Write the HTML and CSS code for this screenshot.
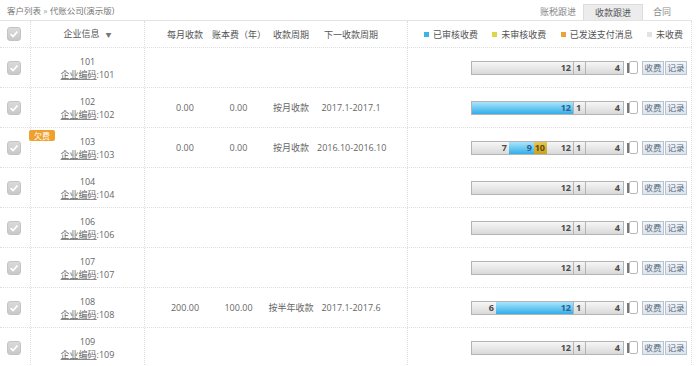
FILE: index.html
```html
<!DOCTYPE html>
<html lang="zh-CN">
<head>
    <meta charset="UTF-8">
    <title>客户列表</title>
    <link rel="stylesheet" href="styles.css">
</head>
<body>
<div class="page">
    <div class="topbar">
        <div class="crumb">客户列表 <span class="sep">»</span> 代账公司(演示版)</div>
        <div class="tabs">
            <span class="tab first">账税跟进</span>
            <span class="tab active">收款跟进</span>
            <span class="tab">合同</span>
        </div>
    </div>

    <div class="row head">
        <div class="cell-check"><span class="chk"><svg viewBox="0 0 12 12" width="12" height="12"><path d="M2.6 6.2 L5 8.5 L9.4 3.6" fill="none" stroke="#fff" stroke-width="1.7"/></svg></span></div>
        <div class="cell-info"><span>企业信息<span class="caret">▼</span></span></div>
        <div class="cell-data">
            <span></span><span>每月收款</span><span>账本费（年）</span><span>收款周期</span><span>下一收款周期</span>
        </div>
        <div class="cell-bar legend">
            <span class="lg"><i class="sq blue"></i>已审核收费</span>
            <span class="lg"><i class="sq yellow"></i>未审核收费</span>
            <span class="lg"><i class="sq orange"></i>已发送支付消息</span>
            <span class="lg"><i class="sq grey"></i>未收费</span>
        </div>
    </div>

    <!-- 101 -->
    <div class="row">
        <div class="cell-check"><span class="chk"><svg viewBox="0 0 12 12" width="12" height="12"><path d="M2.6 6.2 L5 8.5 L9.4 3.6" fill="none" stroke="#fff" stroke-width="1.7"/></svg></span></div>
        <div class="cell-info"><span>101</span><span><u>企业编码</u>:101</span></div>
        <div class="cell-data"></div>
        <div class="cell-bar">
            <div class="months"><span class="seg fill">12</span></div>
            <span class="box one">1</span><span class="box four">4</span>
            <span class="handle"><i class="grip"></i><i class="knob"></i></span>
            <span class="btn">收费</span><span class="btn">记录</span>
        </div>
    </div>

    <!-- 102 -->
    <div class="row">
        <div class="cell-check"><span class="chk"><svg viewBox="0 0 12 12" width="12" height="12"><path d="M2.6 6.2 L5 8.5 L9.4 3.6" fill="none" stroke="#fff" stroke-width="1.7"/></svg></span></div>
        <div class="cell-info"><span>102</span><span><u>企业编码</u>:102</span></div>
        <div class="cell-data">
            <span></span><span>0.00</span><span>0.00</span><span>按月收款</span><span>2017.1-2017.1</span>
        </div>
        <div class="cell-bar">
            <div class="months"><span class="seg fill paid">12</span></div>
            <span class="box one">1</span><span class="box four">4</span>
            <span class="handle"><i class="grip"></i><i class="knob"></i></span>
            <span class="btn">收费</span><span class="btn">记录</span>
        </div>
    </div>

    <!-- 103 -->
    <div class="row">
        <span class="badge">欠费</span>
        <div class="cell-check"><span class="chk"><svg viewBox="0 0 12 12" width="12" height="12"><path d="M2.6 6.2 L5 8.5 L9.4 3.6" fill="none" stroke="#fff" stroke-width="1.7"/></svg></span></div>
        <div class="cell-info"><span>103</span><span><u>企业编码</u>:103</span></div>
        <div class="cell-data">
            <span></span><span>0.00</span><span>0.00</span><span>按月收款</span><span>2016.10-2016.10</span>
        </div>
        <div class="cell-bar">
            <div class="months">
                <span class="seg" style="width: 37px;">7</span>
                <span class="seg paid" style="width: 25px;">9</span>
                <span class="seg sent" style="width: 13px;">10</span>
                <span class="seg fill">12</span>
            </div>
            <span class="box one">1</span><span class="box four">4</span>
            <span class="handle"><i class="grip"></i><i class="knob"></i></span>
            <span class="btn">收费</span><span class="btn">记录</span>
        </div>
    </div>

    <!-- 104 -->
    <div class="row">
        <div class="cell-check"><span class="chk"><svg viewBox="0 0 12 12" width="12" height="12"><path d="M2.6 6.2 L5 8.5 L9.4 3.6" fill="none" stroke="#fff" stroke-width="1.7"/></svg></span></div>
        <div class="cell-info"><span>104</span><span><u>企业编码</u>:104</span></div>
        <div class="cell-data"></div>
        <div class="cell-bar">
            <div class="months"><span class="seg fill">12</span></div>
            <span class="box one">1</span><span class="box four">4</span>
            <span class="handle"><i class="grip"></i><i class="knob"></i></span>
            <span class="btn">收费</span><span class="btn">记录</span>
        </div>
    </div>

    <!-- 106 -->
    <div class="row">
        <div class="cell-check"><span class="chk"><svg viewBox="0 0 12 12" width="12" height="12"><path d="M2.6 6.2 L5 8.5 L9.4 3.6" fill="none" stroke="#fff" stroke-width="1.7"/></svg></span></div>
        <div class="cell-info"><span>106</span><span><u>企业编码</u>:106</span></div>
        <div class="cell-data"></div>
        <div class="cell-bar">
            <div class="months"><span class="seg fill">12</span></div>
            <span class="box one">1</span><span class="box four">4</span>
            <span class="handle"><i class="grip"></i><i class="knob"></i></span>
            <span class="btn">收费</span><span class="btn">记录</span>
        </div>
    </div>

    <!-- 107 -->
    <div class="row">
        <div class="cell-check"><span class="chk"><svg viewBox="0 0 12 12" width="12" height="12"><path d="M2.6 6.2 L5 8.5 L9.4 3.6" fill="none" stroke="#fff" stroke-width="1.7"/></svg></span></div>
        <div class="cell-info"><span>107</span><span><u>企业编码</u>:107</span></div>
        <div class="cell-data"></div>
        <div class="cell-bar">
            <div class="months"><span class="seg fill">12</span></div>
            <span class="box one">1</span><span class="box four">4</span>
            <span class="handle"><i class="grip"></i><i class="knob"></i></span>
            <span class="btn">收费</span><span class="btn">记录</span>
        </div>
    </div>

    <!-- 108 -->
    <div class="row">
        <div class="cell-check"><span class="chk"><svg viewBox="0 0 12 12" width="12" height="12"><path d="M2.6 6.2 L5 8.5 L9.4 3.6" fill="none" stroke="#fff" stroke-width="1.7"/></svg></span></div>
        <div class="cell-info"><span>108</span><span><u>企业编码</u>:108</span></div>
        <div class="cell-data">
            <span></span><span>200.00</span><span>100.00</span><span>按半年收款</span><span>2017.1-2017.6</span>
        </div>
        <div class="cell-bar">
            <div class="months">
                <span class="seg" style="width: 24px;">6</span>
                <span class="seg fill paid">12</span>
            </div>
            <span class="box one">1</span><span class="box four">4</span>
            <span class="handle"><i class="grip"></i><i class="knob"></i></span>
            <span class="btn">收费</span><span class="btn">记录</span>
        </div>
    </div>

    <!-- 109 -->
    <div class="row">
        <div class="cell-check"><span class="chk"><svg viewBox="0 0 12 12" width="12" height="12"><path d="M2.6 6.2 L5 8.5 L9.4 3.6" fill="none" stroke="#fff" stroke-width="1.7"/></svg></span></div>
        <div class="cell-info"><span>109</span><span><u>企业编码</u>:109</span></div>
        <div class="cell-data"></div>
        <div class="cell-bar">
            <div class="months"><span class="seg fill">12</span></div>
            <span class="box one">1</span><span class="box four">4</span>
            <span class="handle"><i class="grip"></i><i class="knob"></i></span>
            <span class="btn">收费</span><span class="btn">记录</span>
        </div>
    </div>
</div>
</body>
</html>
```

FILE: styles.css
```css
* {
    box-sizing: border-box;
}
body {
    margin: 0;
    font-family: "Open Sans", "Noto Sans CJK SC", sans-serif;
    font-size: 9px;
    color: #666;
    background-color: #fff;
}
.page {
    width: 700px;
    height: 366px;
    overflow: hidden;
}

/* top bar */
.topbar {
    width: 692px;
    height: 21px;
    display: flex;
    justify-content: space-between;
    align-items: flex-end;
    border-bottom: 1px solid #e4e4e4;
}
.crumb {
    align-self: center;
    padding-left: 7px;
    font-size: 8.5px;
    color: #777;
}
.crumb .sep {
    color: #aaa;
}
.tabs {
    display: flex;
    align-items: flex-end;
    padding-right: 11px;
}
.tab {
    height: 16px;
    line-height: 16px;
    padding: 0 10px;
    color: #8a8a8a;
}
.tab.first {
    padding: 0 7px;
}
.tab.active {
    padding: 0 11px;
    background-color: #ececec;
    border: 1px solid #dcdcdc;
    border-bottom: none;
    color: #555;
}

/* table rows */
.row {
    position: relative;
    width: 692px;
    height: 40px;
    display: grid;
    grid-template-columns: 31px 114px 263px 284px;
    border-bottom: 1px dotted #dedede;
}
.row.head {
    height: 27px;
    color: #555;
}
.cell-check,
.cell-info,
.cell-data,
.cell-bar {
    border-right: 1px dotted #dedede;
}
.cell-check {
    display: flex;
    align-items: center;
    padding-left: 7px;
}
.chk {
    width: 14px;
    height: 14px;
    border-radius: 3px;
    border: 1px solid #c4c4c4;
    background: linear-gradient(#dadada, #c8c8c8);
    display: flex;
    align-items: center;
    justify-content: center;
}
.cell-info {
    display: flex;
    flex-direction: column;
    justify-content: center;
    align-items: center;
    line-height: 13px;
}
.cell-info u {
    text-decoration-color: #888;
}
.caret {
    font-size: 6px;
    margin-left: 6px;
    color: #777;
}
.cell-data {
    display: grid;
    grid-template-columns: 13px 54px 53px 52px 68px;
    align-items: center;
    text-align: center;
    white-space: nowrap;
}
.badge {
    position: absolute;
    left: 29px;
    top: 2px;
    width: 26px;
    height: 11px;
    line-height: 11px;
    text-align: center;
    font-size: 8px;
    color: #fff;
    background-color: #f0a02c;
    border-radius: 2px;
    z-index: 2;
}

/* month bar */
.cell-bar {
    display: flex;
    align-items: center;
    justify-content: flex-end;
    padding-right: 4px;
}
.months {
    width: 103px;
    height: 14px;
    display: flex;
    border: 1px solid #b4b4b4;
    background: linear-gradient(#f6f6f6, #d9d9d9);
}
.seg {
    display: flex;
    align-items: center;
    justify-content: flex-end;
    padding-right: 2px;
    font-weight: bold;
    color: #4a4a4a;
    background: linear-gradient(#f6f6f6, #d9d9d9);
}
.seg.fill {
    flex: 1;
}
.seg.paid {
    background: linear-gradient(#a9e5fb, #33aee9);
    color: #2b5f8c;
}
.seg.sent {
    background: linear-gradient(#e6c750, #c7a022);
    color: #5e4a10;
}
.box {
    height: 14px;
    display: flex;
    align-items: center;
    margin-left: -1px;
    border: 1px solid #b4b4b4;
    background: linear-gradient(#f6f6f6, #d9d9d9);
    font-weight: bold;
    color: #4a4a4a;
}
.box.one {
    width: 13px;
    padding-left: 2px;
}
.box.four {
    width: 39px;
    justify-content: flex-end;
    padding-right: 3px;
}
.handle {
    width: 17px;
    height: 14px;
    display: flex;
    align-items: center;
    padding-left: 3px;
}
.grip {
    width: 2px;
    height: 10px;
    background-color: #777;
}
.knob {
    width: 9px;
    height: 13px;
    border: 1px solid #b8b8b8;
    border-radius: 2px;
    background-color: #fff;
}
.btn {
    width: 22px;
    height: 14px;
    line-height: 12px;
    text-align: center;
    margin-left: 1px;
    border: 1px solid #b9c3cd;
    background: linear-gradient(#f2f6fa, #dde5ed);
    color: #5b6b7e;
    font-size: 8.5px;
}

/* legend in the header row */
.cell-bar.legend {
    justify-content: space-between;
    padding: 0 8px 0 16px;
}
.lg {
    display: flex;
    align-items: center;
    white-space: nowrap;
}
.sq {
    width: 5px;
    height: 5px;
    margin-right: 4px;
}
.sq.blue { background-color: #3cb2e8; }
.sq.yellow { background-color: #dcd648; }
.sq.orange { background-color: #e8a436; }
.sq.grey { background-color: #e2e2e2; }
```
